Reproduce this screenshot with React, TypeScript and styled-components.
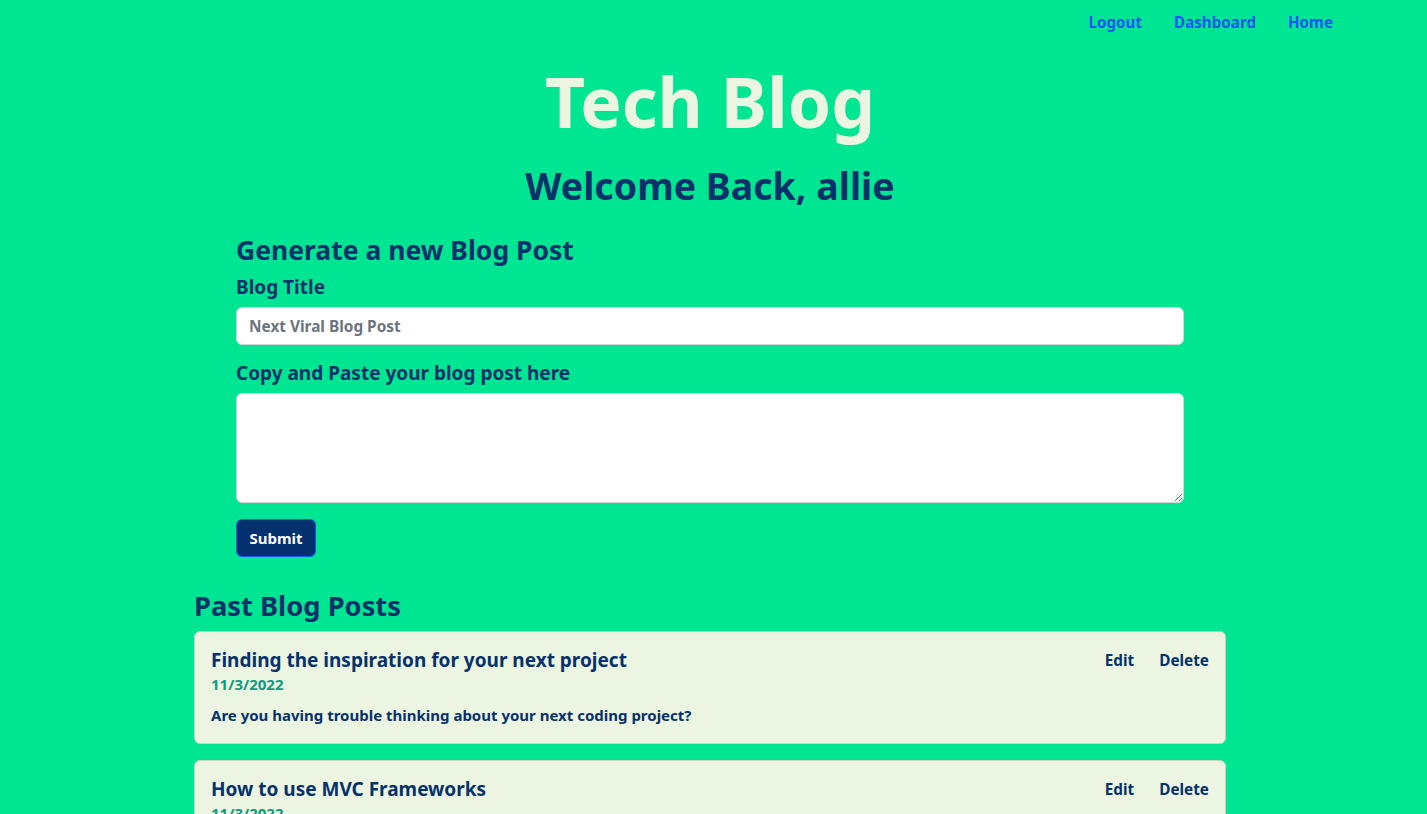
import React from "react";
import styled, { createGlobalStyle } from "styled-components";

const GREEN = "#00e592";
const NAVY = "#07316b";
const CREAM = "#ebf5e1";
const FONT = `"Noto Sans", "DejaVu Sans", sans-serif`;

const Global = createGlobalStyle`
  html, body { margin: 0; padding: 0; background: ${GREEN}; }
  body { font-family: ${FONT}; font-weight: 700; color: ${NAVY}; }
  * { box-sizing: border-box; }
`;

const Page = styled.div`
  min-height: 814px;
  padding-right: 7px;
  display: flex;
  flex-direction: column;
`;

const Nav = styled.nav`
  display: flex;
  justify-content: flex-end;
  gap: 32px;
  padding: 10px 87px 0 0;
`;

const NavLink = styled.a`
  color: #1657f0;
  font-size: 15.2px;
  line-height: 24px;
  text-decoration: none;
  cursor: pointer;
`;

const Main = styled.main`
  width: 1032px;
  margin: 0 auto;
  display: flex;
  flex-direction: column;
`;

const Title = styled.h1`
  margin: 26px 0 0;
  text-align: center;
  color: ${CREAM};
  font-size: 69.5px;
  line-height: 82px;
  font-weight: 700;
`;

const Welcome = styled.h2`
  margin: 20px 0 0;
  text-align: center;
  font-size: 37.5px;
  line-height: 48px;
  font-weight: 700;
`;

const Form = styled.form`
  margin: 23px 42px 0;
  display: flex;
  flex-direction: column;
  align-items: flex-start;
`;

const FormTitle = styled.h3`
  margin: 0;
  font-size: 26.5px;
  line-height: 34px;
  font-weight: 700;
`;

const Label = styled.label<{ $top: number }>`
  font-size: 19px;
  line-height: 24px;
  margin-top: ${(p) => p.$top}px;
`;

const Input = styled.input`
  margin-top: 8px;
  width: 100%;
  height: 38px;
  border: 1px solid #ced4da;
  border-radius: 6px;
  padding: 0 12px;
  font-family: ${FONT};
  font-weight: 700;
  font-size: 15.4px;
  color: ${NAVY};
  background: #fff;
  &::placeholder { color: #6c757d; }
`;

const TextArea = styled.textarea`
  margin-top: 8px;
  width: 100%;
  height: 110px;
  border: 1px solid #ced4da;
  border-radius: 6px;
  padding: 6px 12px;
  font-family: ${FONT};
  font-size: 15px;
  background: #fff;
  resize: vertical;
  display: block;
`;

const Submit = styled.button`
  margin-top: 16px;
  width: 80px;
  height: 38px;
  background: #05306e;
  color: #fff;
  border: 1px solid #1657f0;
  border-radius: 6px;
  font-family: ${FONT};
  font-weight: 700;
  font-size: 15px;
  cursor: pointer;
`;

const SectionTitle = styled.h3`
  margin: 32px 0 8px;
  font-size: 27.3px;
  line-height: 34px;
  font-weight: 700;
`;

const PostList = styled.div`
  display: flex;
  flex-direction: column;
  gap: 16px;
`;

const Card = styled.article`
  background: ${CREAM};
  border: 1px solid #c9d3c0;
  border-radius: 6px;
  padding: 16px 16px;
  display: grid;
  grid-template-columns: 1fr auto;
  column-gap: 16px;
`;

const CardBody = styled.div`
  display: flex;
  flex-direction: column;
`;

const PostTitle = styled.h5`
  margin: 0;
  font-size: 19px;
  line-height: 24px;
  font-weight: 700;
`;

const PostDate = styled.div`
  color: #109a7c;
  font-size: 15px;
  line-height: 24px;
`;

const PostText = styled.p`
  margin: 7px 0 0;
  font-size: 15px;
  line-height: 24px;
`;

const Actions = styled.div`
  display: flex;
  gap: 25px;
  align-items: flex-start;
`;

const Action = styled.a`
  color: ${NAVY};
  font-size: 15.3px;
  line-height: 24px;
  text-decoration: none;
  cursor: pointer;
`;

const posts = [
  {
    title: "Finding the inspiration for your next project",
    date: "11/3/2022",
    text: "Are you having trouble thinking about your next coding project?",
  },
  {
    title: "How to use MVC Frameworks",
    date: "11/3/2022",
    text: "Learn how the Model-View-Controller pattern organizes your code.",
  },
];

export default function App() {
  return (
    <>
      <Global />
      <Page>
        <Nav>
          <NavLink>Logout</NavLink>
          <NavLink>Dashboard</NavLink>
          <NavLink>Home</NavLink>
        </Nav>
        <Main>
          <Title>Tech Blog</Title>
          <Welcome>Welcome Back, allie</Welcome>
          <Form onSubmit={(e) => e.preventDefault()}>
            <FormTitle>Generate a new Blog Post</FormTitle>
            <Label $top={8}>Blog Title</Label>
            <Input placeholder="Next Viral Blog Post" />
            <Label $top={16}>Copy and Paste your blog post here</Label>
            <TextArea />
            <Submit type="submit">Submit</Submit>
          </Form>
          <SectionTitle>Past Blog Posts</SectionTitle>
          <PostList>
            {posts.map((p) => (
              <Card key={p.title}>
                <CardBody>
                  <PostTitle>{p.title}</PostTitle>
                  <PostDate>{p.date}</PostDate>
                  <PostText>{p.text}</PostText>
                </CardBody>
                <Actions>
                  <Action>Edit</Action>
                  <Action>Delete</Action>
                </Actions>
              </Card>
            ))}
          </PostList>
        </Main>
      </Page>
    </>
  );
}
